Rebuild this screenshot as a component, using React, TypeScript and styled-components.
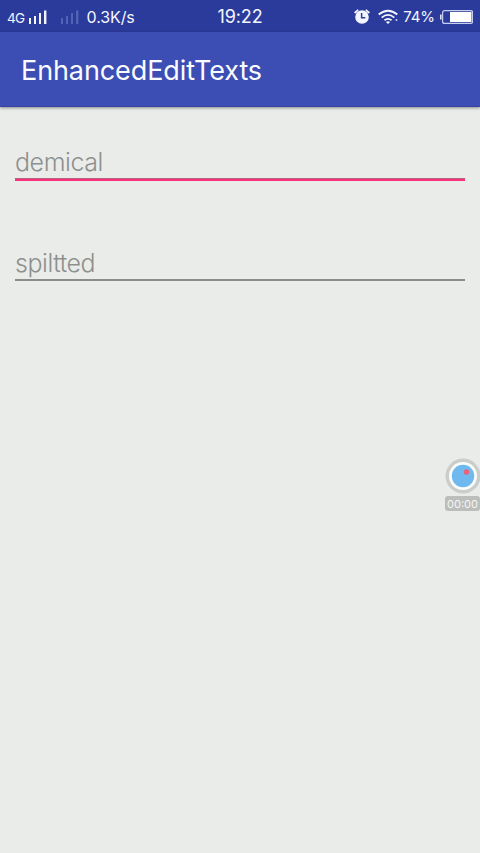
import React from "react";
import styled, { createGlobalStyle } from "styled-components";

const GlobalStyle = createGlobalStyle`
  * { box-sizing: border-box; }
  body { margin: 0; background: #eaecea; font-family: Inter, "Liberation Sans", sans-serif; }
`;

const Screen = styled.div`
  position: relative;
  display: flex;
  flex-direction: column;
  width: 480px;
  height: 853px;
  overflow: hidden;
  background: #eaecea;
`;

const StatusBar = styled.header`
  display: grid;
  grid-template-columns: 1fr auto 1fr;
  align-items: center;
  height: 32px;
  flex: none;
  padding: 1px 7px 0;
  background: #2b3b9b;
  color: #f4f6ff;
`;

const StatusGroup = styled.div<{ $end?: boolean }>`
  display: flex;
  align-items: center;
  height: 31px;
  justify-content: ${(p) => (p.$end ? "flex-end" : "flex-start")};
`;

const StatusText = styled.span<{ $size: number; $spacing?: number; $drop?: number }>`
  font-size: ${(p) => p.$size}px;
  line-height: 20px;
  letter-spacing: ${(p) => p.$spacing ?? 0}px;
  padding-top: ${(p) => p.$drop ?? 0}px;
  white-space: nowrap;
`;

const SignalIcon = styled.svg<{ $dim?: boolean }>`
  width: 20px;
  height: 15px;
  margin-left: ${(p) => (p.$dim ? 12 : 3)}px;
  margin-right: ${(p) => (p.$dim ? 7 : 0)}px;
  fill: ${(p) => (p.$dim ? "#5262b6" : "#f4f6ff")};
`;

const Glyph = styled.svg<{ $gap: number }>`
  display: block;
  flex: none;
  margin-right: ${(p) => p.$gap}px;
`;

const AppBar = styled.div`
  display: flex;
  align-items: center;
  flex: none;
  height: 75px;
  padding: 4px 21px 0;
  background: #3c4eb3;
  border-bottom: 1px solid #3545a0;
  box-shadow: 0 1px 3px rgba(0, 0, 0, 0.42);
`;

const Title = styled.h1`
  margin: 0;
  color: #fafbff;
  font-size: 27px;
  font-weight: 375;
  line-height: 34px;
  letter-spacing: -0.1px;
`;

const Form = styled.main`
  display: flex;
  flex-direction: column;
  gap: 66px;
  padding: 39px 15px 0;
`;

const Field = styled.div<{ $focused?: boolean }>`
  height: ${(p) => (p.$focused ? 35 : 34)}px;
  border-bottom: 2px solid ${(p) => (p.$focused ? "#fb3178" : "#8b8d8b")};
  box-shadow: ${(p) => (p.$focused ? "inset 0 -1px #b56486" : "none")};
  color: #8e908e;
  font-size: 25px;
  font-weight: 300;
  line-height: 32px;
  letter-spacing: -0.45px;
`;

const Recorder = styled.aside`
  position: absolute;
  right: 0;
  top: 458px;
  width: 35px;
  display: flex;
  flex-direction: column;
  align-items: center;
`;

const RecorderTime = styled.div`
  width: 35px;
  height: 15px;
  margin-top: 2px;
  border-radius: 3px;
  background: #bcbebc;
  color: #f4f5f4;
  font-size: 11px;
  line-height: 16px;
  text-align: center;
`;

const Signal = ({ dim }: { dim?: boolean }) => (
  <SignalIcon $dim={dim} viewBox="0 0 20 15">
    <rect x="1" y="9" width="2" height="6" />
    <rect x="6" y="7" width="2" height="8" />
    <rect x="11" y="4" width="2" height="11" />
    <rect x="16" y="1.5" width="2.4" height="13.5" />
  </SignalIcon>
);

export default function App() {
  return (
    <Screen>
      <GlobalStyle />
      <StatusBar>
        <StatusGroup>
          <StatusText $size={13.5} $spacing={-0.6} $drop={3}>4G</StatusText>
          <Signal />
          <Signal dim />
          <StatusText $size={16} $spacing={-0.1}>0.3K/s</StatusText>
        </StatusGroup>
        <StatusText $size={18} $spacing={-0.1} $drop={1}>19:22</StatusText>
        <StatusGroup $end>
          <Glyph $gap={8} width="16" height="16" viewBox="0 0 16 16">
            <circle cx="8" cy="8" r="6.8" fill="#f4f6ff" />
            <path d="M1.2 3.5 3.6 1.3M12.4 1.3 14.8 3.5" stroke="#f4f6ff" strokeWidth="1.8" strokeLinecap="round" />
            <path d="M7.6 4V8.7h3.7" fill="none" stroke="#2b3b9b" strokeWidth="1.5" />
          </Glyph>
          <Glyph $gap={4} width="21" height="16" viewBox="0 0 21 16">
            <g fill="none" stroke="#f4f6ff" strokeWidth="1.8">
              <path d="M.7 5.5Q10-2 19.3 5.5" />
              <path d="M3.7 8.6Q10 3.2 16.3 8.6" />
              <path d="M6.5 11.3Q10 8.4 13.5 11.3" />
            </g>
            <path d="M7.9 13Q10 11.3 12.1 13L10 15Z" fill="#f4f6ff" />
            <circle cx="18.5" cy="11" r="1" fill="#cbd2f5" />
          </Glyph>
          <StatusText $size={15} $spacing={-0.1}>74%</StatusText>
          <Glyph $gap={0} width="38" height="14" viewBox="0 0 38 14">
            <rect x="7.6" y=".6" width="30" height="12.8" rx="2" fill="none" stroke="#c7cdf0" strokeWidth="1.2" />
            <path d="M5.8 4.5v5" stroke="#dfe3fb" strokeWidth="1.6" />
            <rect x="15" y="2" width="21.5" height="10" fill="#fff" />
          </Glyph>
        </StatusGroup>
      </StatusBar>
      <AppBar>
        <Title>EnhancedEditTexts</Title>
      </AppBar>
      <Form>
        <Field $focused>demical</Field>
        <Field>spiltted</Field>
      </Form>
      <Recorder>
        <Glyph $gap={0} width="35" height="36" viewBox="0 0 35 36">
          <circle cx="18" cy="18" r="17.5" fill="#cbcdcb" />
          <circle cx="18" cy="18" r="14" fill="#fbfcfc" />
          <circle cx="18" cy="18" r="11.2" fill="#6fb9ef" />
          <circle cx="21.5" cy="14" r="2.7" fill="#e76478" />
        </Glyph>
        <RecorderTime>00:00</RecorderTime>
      </Recorder>
    </Screen>
  );
}
